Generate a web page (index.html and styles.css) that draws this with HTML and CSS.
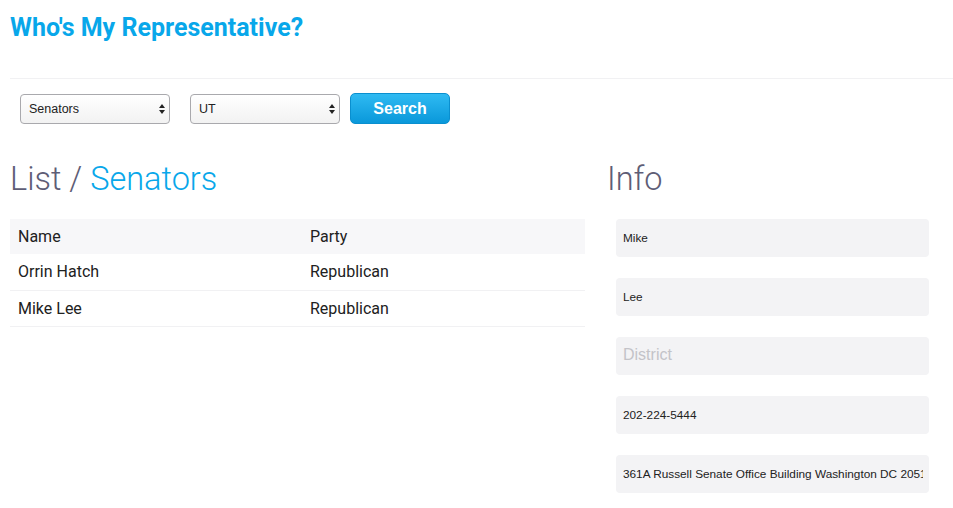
FILE: index.html
```html
<!DOCTYPE html>
<html>
<head>
<meta charset="utf-8">
<link rel="stylesheet" href="styles.css">
</head>
<body>
<header class="top">
  <h1 class="title">Who's My Representative?</h1>
</header>
<form class="search">
  <select class="sel"><option>Senators</option><option>Representatives</option></select>
  <select class="sel"><option>UT</option></select>
  <button type="button" class="btn">Search</button>
</form>
<main class="main">
  <section class="list">
    <h2 class="heading">List / <span class="accent">Senators</span></h2>
    <table class="table">
      <thead><tr><th class="c-name">Name</th><th>Party</th></tr></thead>
      <tbody>
        <tr><td>Orrin Hatch</td><td>Republican</td></tr>
        <tr><td>Mike Lee</td><td>Republican</td></tr>
      </tbody>
    </table>
  </section>
  <section class="info">
    <h2 class="heading">Info</h2>
    <div class="fields">
      <input class="field" value="Mike">
      <input class="field" value="Lee">
      <input class="field" placeholder="District">
      <input class="field" value="202-224-5444">
      <input class="field" value="361A Russell Senate Office Building Washington DC 20510">
    </div>
  </section>
</main>
</body>
</html>
```
FILE: styles.css
```css
* { box-sizing: border-box; }
html, body { margin: 0; padding: 0; background: #fff; }
body { font-family: Roboto, "Noto Sans", sans-serif; color: #222; }

.top {
  margin-left: 10px;
  height: 79px;
  border-bottom: 1px solid #f1f1f3;
  padding-top: 13px;
}
.title {
  margin: 0;
  font-size: 25px;
  font-weight: 700;
  color: #08a7ea;
  line-height: 30px;
}

.search {
  display: flex;
  align-items: center;
  padding: 14px 0 0 20px;
  height: 45px;
}
.sel {
  -webkit-appearance: none;
  appearance: none;
  width: 150px;
  height: 30px;
  margin-right: 20px;
  border: 1px solid #a9a9ad;
  border-radius: 4px;
  padding: 0 20px 0 8px;
  font-family: "Liberation Sans", Arial, sans-serif;
  font-size: 12.5px;
  color: #222;
  background-color: #f8f8f8;
  background-image: url("data:image/svg+xml;utf8,<svg xmlns='http://www.w3.org/2000/svg' width='6' height='10' viewBox='0 0 6 10'><path d='M3 0 L6 4 L0 4 Z M0 6 L6 6 L3 10 Z' fill='%23222'/></svg>"), linear-gradient(#ffffff, #f2f2f2);
  background-repeat: no-repeat, no-repeat;
  background-position: right 4px center, 0 0;
}
.sel:nth-of-type(2) { margin-right: 10px; }
.btn {
  width: 100px;
  height: 31px;
  border: 1px solid #0a8fcf;
  border-radius: 5px;
  background: linear-gradient(#2fbaf2, #0a98da);
  color: #fff;
  font-family: "Liberation Sans", Arial, sans-serif;
  font-weight: 700;
  font-size: 16px;
  padding: 0;
}

.main {
  display: flex;
  padding: 0 0 0 10px;
}
.list { width: 575px; }
.info { margin-left: 22px; width: 330px; }
.heading {
  margin: 0;
  font-size: 32.5px;
  font-weight: 300;
  color: #5e5d76;
  line-height: 40px;
  padding-top: 35px;
  height: 95px;
}
.accent { color: #08a7ea; }

.table {
  width: 100%;
  border-collapse: collapse;
  font-size: 16px;
}
.table th, .table td {
  text-align: left;
  font-weight: 400;
  padding: 0 8px;
  height: 36px;
  border-bottom: 1px solid #f1f1f3;
  color: #212121;
}
.table thead th { background: #f7f7f9; height: 35px; border-bottom: none; }
.c-name { width: 292px; }

.fields {
  display: flex;
  flex-direction: column;
  gap: 21px;
  padding-left: 9px;
}
.field {
  width: 313px;
  height: 38px;
  border: none;
  border-radius: 4px;
  background: #f3f3f5;
  padding: 0 6px 0 7px;
  font-family: "Liberation Sans", Arial, sans-serif;
  font-size: 11.8px;
  color: #222;
  outline: none;
}
.field::placeholder {
  color: #c3c3c8;
  font-size: 16px;
}
```
